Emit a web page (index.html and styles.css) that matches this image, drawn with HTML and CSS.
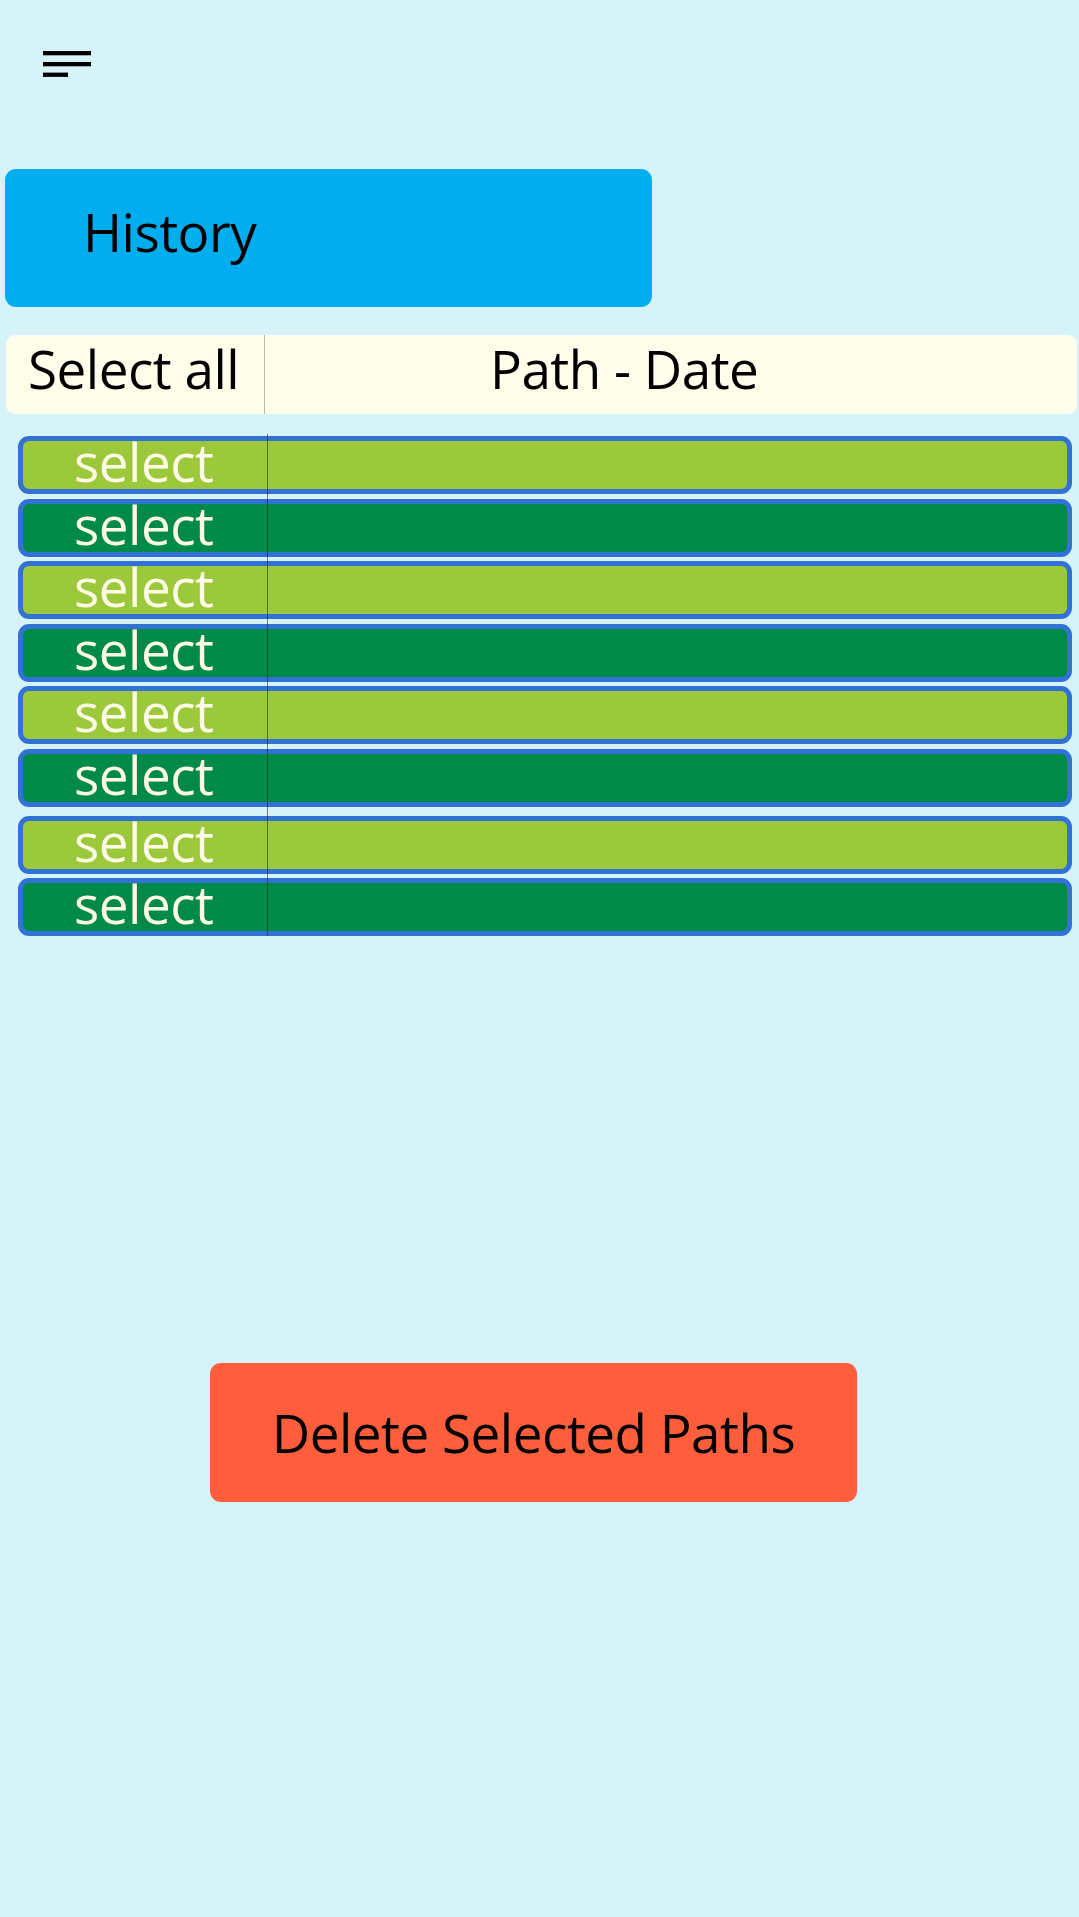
FILE: index.html
```html
<!DOCTYPE html>
<html>
<head>
<meta charset="utf-8">
<link rel="stylesheet" href="styles.css">
</head>
<body>
<div class="topbar">
  <svg class="menu" width="48" height="27" viewBox="0 0 48 27">
    <rect x="0" y="0" width="48" height="4.3" fill="#000"/>
    <rect x="0" y="11" width="48" height="4.3" fill="#000"/>
    <rect x="0" y="21.6" width="25" height="4.3" fill="#000"/>
  </svg>
</div>
<div class="title">History</div>
<div class="thead">
  <div class="th-sel">Select all</div>
  <div class="th-path">Path - Date</div>
</div>
<div class="list">
  <div class="row light"><div class="cell-sel">select</div><div class="cell-path"></div></div>
  <div class="row dark"><div class="cell-sel">select</div><div class="cell-path"></div></div>
  <div class="row light"><div class="cell-sel">select</div><div class="cell-path"></div></div>
  <div class="row dark"><div class="cell-sel">select</div><div class="cell-path"></div></div>
  <div class="row light"><div class="cell-sel">select</div><div class="cell-path"></div></div>
  <div class="row dark"><div class="cell-sel">select</div><div class="cell-path"></div></div>
  <div class="row light spaced"><div class="cell-sel">select</div><div class="cell-path"></div></div>
  <div class="row dark"><div class="cell-sel">select</div><div class="cell-path"></div></div>
</div>
<div class="actions">
  <div class="delete">Delete Selected Paths</div>
</div>
</body>
</html>
```
FILE: styles.css
```css
html, body {
  margin: 0;
  padding: 0;
}
body {
  background: #d7f3fa;
  width: 1079px;
  height: 1917px;
  font-family: "Open Sans", "Noto Sans", sans-serif;
  font-size: 53px;
  letter-spacing: -0.5px;
  color: #000;
  overflow: hidden;
}
.topbar {
  height: 169px;
  padding: 51px 0 0 43px;
  box-sizing: border-box;
}
.menu {
  display: block;
}
.title {
  margin-left: 5px;
  width: 647px;
  height: 138px;
  box-sizing: border-box;
  background: #00aeef;
  border-radius: 11px;
  padding: 0 0 13px 78px;
  line-height: 125px;
}
.thead {
  margin: 28px 0 0 6px;
  width: 1071px;
  height: 79px;
  background: #fffeeb;
  border-radius: 9px;
  display: flex;
}
.th-sel {
  width: 259px;
  flex: none;
  box-sizing: border-box;
  border-right: 1px solid #b9b9aa;
  padding-left: 22px;
  line-height: 67px;
}
.th-path {
  flex: 1;
  padding-left: 225px;
  line-height: 67px;
}
.list {
  position: relative;
  margin: 22px 0 0 18px;
  width: 1054px;
  display: flex;
  flex-direction: column;
  gap: 4.5px;
}
.list::before {
  content: "";
  position: absolute;
  left: 249px;
  top: -2px;
  bottom: 0;
  width: 1px;
  background: rgba(10, 40, 10, 0.55);
  z-index: 1;
}
.row {
  height: 58px;
  box-sizing: border-box;
  border: 5px solid #3272d6;
  border-radius: 11px;
  display: flex;
  align-items: flex-start;
}
.row.spaced {
  margin-top: 4.5px;
}
.light {
  background: #9cc93b;
}
.dark {
  background: #008a47;
}
.cell-sel {
  width: 244px;
  flex: none;
  padding-left: 51px;
  box-sizing: border-box;
  line-height: 41px;
  color: #fffbe6;
}
.cell-path {
  flex: 1;
}
.actions {
  margin-top: 427px;
  padding-left: 210px;
}
.delete {
  width: 647px;
  height: 139px;
  background: #ff5e3d;
  border-radius: 11px;
  text-align: center;
  line-height: 139px;
}
```
